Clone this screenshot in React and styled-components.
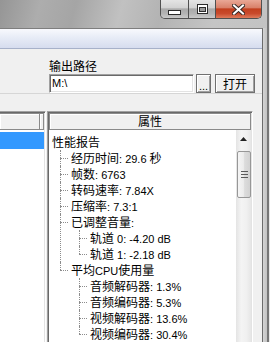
import React from 'react';
import styled, { createGlobalStyle } from 'styled-components';

const GlobalStyle = createGlobalStyle`
  html, body {
    margin: 0;
    padding: 0;
  }

  body {
    background: #f0f0f0;
    font-family: "Noto Sans CJK SC", "Liberation Sans", sans-serif;
    font-size: 12px;
    color: #000;
  }
`;

const Screen = styled.div`
  width: 270px;
  height: 342px;
  overflow: hidden;
  box-sizing: border-box;
  padding-right: 3px;
  display: flex;
  flex-direction: column;
  background: #cfcfcf;
  box-shadow: inset -1px 0 0 #e6e6e6, inset -3px 0 0 #767676;
`;

const TitleBar = styled.div`
  height: 28px;
  flex-shrink: 0;
  display: flex;
  justify-content: flex-end;
  align-items: flex-start;
  padding-right: 5px;
  background: linear-gradient(105deg, #959595 0%, #adadad 15%, #a5a5a5 28%, #c1c1c1 45%, #b3b3b3 60%, #c5c5c5 80%, #c3c3c3 100%);
`;

const Controls = styled.div`
  display: flex;
  height: 19px;
  box-sizing: border-box;
  border: 1px solid #505050;
  border-top: none;
  border-radius: 0 0 5px 5px;
  overflow: hidden;
`;

const CtrlButton = styled.div`
  width: ${(p) => p.$w}px;
  display: flex;
  justify-content: center;
  align-items: ${(p) => (p.$low ? 'flex-end' : 'center')};
  padding-bottom: ${(p) => (p.$low ? '3px' : '0')};
  box-sizing: border-box;
  border-left: ${(p) => (p.$first ? 'none' : '1px solid #505050')};
  background: ${(p) =>
    p.$close
      ? 'linear-gradient(#e9a896 0%, #d9826b 42%, #c2401f 50%, #c94a2c 75%, #df7b5c 100%)'
      : 'linear-gradient(#e4e4e4 0%, #d3d3d3 42%, #aaaaaa 50%, #b3b3b3 75%, #c9c9c9 100%)'};
`;

const Body = styled.div`
  flex: 1;
  min-height: 0;
  display: flex;
`;

const Client = styled.div`
  width: 263px;
  box-sizing: border-box;
  border-top: 1px solid #7e7e7e;
  border-right: 1px solid #6b6b6b;
  background: #f0f0f0;
  display: flex;
  flex-direction: column;
`;

const FrameStrip = styled.div`
  flex: 1;
  background: linear-gradient(to right, #d4d4d4, #c2c2c2);
`;

const Band = styled.div`
  height: 19px;
  flex-shrink: 0;
  border-bottom: 1px solid #a7b1c9;
  background: linear-gradient(#f8f9fd, #e9edf7 40%, #d6dcee);
`;

const TopArea = styled.div`
  height: 35px;
  flex-shrink: 0;
  padding: 9px 0 0 49px;
  border-bottom: 1px solid #d6d6d6;
`;

const FieldLabel = styled.div`
  height: 16px;
  line-height: 16px;
`;

const FieldRow = styled.div`
  display: flex;
  height: 19px;
`;

const PathInput = styled.div`
  width: 145px;
  height: 19px;
  box-sizing: border-box;
  padding-left: 2px;
  background: #fff;
  border: 1px solid;
  border-color: #a0a0a0 #fff #fff #a0a0a0;
  box-shadow: inset 1px 1px 0 #696969, inset -1px -1px 0 #e3e3e3;
  font-family: "Liberation Sans", sans-serif;
  font-size: 11px;
  line-height: 17px;
`;

const PushButton = styled.div`
  width: ${(p) => p.$w}px;
  height: 19px;
  margin-left: ${(p) => p.$gap}px;
  box-sizing: border-box;
  border: 1px solid #707070;
  box-shadow: inset 1px 1px 0 #fff, inset -1px -1px 0 #a0a0a0;
  background: #f0f0f0;
  display: flex;
  justify-content: center;
  align-items: ${(p) => (p.$dots ? 'flex-end' : 'center')};
  line-height: ${(p) => (p.$dots ? '12px' : '16px')};
  font-family: ${(p) => (p.$dots ? '"Liberation Sans", sans-serif' : 'inherit')};
  font-size: ${(p) => (p.$dots ? '11px' : '12px')};
`;

const Panels = styled.div`
  flex: 1;
  min-height: 0;
  display: flex;
  gap: 1px;
  margin-top: 17px;
`;

const LeftPanel = styled.div`
  width: 46px;
  box-sizing: border-box;
  padding: 1px 1px 0 0;
  border-top: 1px solid #a0a0a0;
  border-right: 1px solid #fff;
  box-shadow: inset 0 1px 0 #696969, inset -1px 0 0 #e3e3e3;
  display: flex;
  flex-direction: column;
`;

const RightPanel = styled.div`
  width: 206px;
  box-sizing: border-box;
  padding: 1px 1px 0 1px;
  border: 1px solid;
  border-color: #a0a0a0 #fff #fff #a0a0a0;
  border-bottom: none;
  box-shadow: inset 1px 1px 0 #696969, inset -1px 0 0 #e3e3e3;
  display: flex;
  flex-direction: column;
`;

const HeaderRow = styled.div`
  height: 17px;
  flex-shrink: 0;
  display: flex;
`;

const HeaderCell = styled.div`
  flex: ${(p) => (p.$w ? `0 0 ${p.$w}px` : '1')};
  box-sizing: border-box;
  border: 1px solid #8a8a8a;
  border-left: ${(p) => (p.$noLeft ? 'none' : '1px solid #8a8a8a')};
  box-shadow: inset 1px 1px 0 #fff;
  background: #f0f0f0;
  text-align: center;
  line-height: 14px;
`;

const ListArea = styled.div`
  flex: 1;
  background: #fff;
  padding-top: 2px;
`;

const SelectedRow = styled.div`
  height: 17px;
  background: #3399ff;
`;

const TreeArea = styled.div`
  flex: 1;
  min-height: 0;
  display: flex;
  background: #fff;
`;

const TreeBody = styled.div`
  flex: 1;
  overflow: hidden;
  padding: 4px 0 0 3px;
`;

const NodeLabel = styled.div`
  height: 16px;
  line-height: 16px;
  white-space: nowrap;
`;

const Latin = styled.span`
  font-family: "Liberation Sans", sans-serif;
  font-size: 11px;
`;

const ChildList = styled.div`
  padding-left: 19px;
`;

const ChildItem = styled.div`
  position: relative;

  &::before {
    content: '';
    position: absolute;
    left: -11px;
    top: 0;
    height: ${(p) => (p.$last ? '8px' : '100%')};
    border-left: 1px dotted #8c8c8c;
  }

  &::after {
    content: '';
    position: absolute;
    left: -11px;
    top: 8px;
    width: 8px;
    border-top: 1px dotted #8c8c8c;
  }
`;

const Scrollbar = styled.div`
  width: 15px;
  flex-shrink: 0;
  display: flex;
  flex-direction: column;
  background: linear-gradient(to right, #e4e4e4, #f4f4f4 35%, #f0f0f0 70%, #e6e6e6);
`;

const ArrowButton = styled.div`
  height: 17px;
  display: flex;
  justify-content: center;
  align-items: center;
`;

const Thumb = styled.div`
  height: 47px;
  margin: 4px 0 0 1px;
  box-sizing: border-box;
  border: 1px solid #979797;
  border-radius: 2px;
  background: linear-gradient(to right, #f5f5f5, #ececec 45%, #dcdcdc 55%, #d2d2d2);
  display: flex;
  justify-content: center;
  align-items: center;
`;

const tree = {
  text: '性能报告',
  children: [
    { text: '经历时间: 29.6 秒' },
    { text: '帧数: 6763' },
    { text: '转码速率: 7.84X' },
    { text: '压缩率: 7.3:1' },
    {
      text: '已调整音量:',
      children: [{ text: '轨道 0: -4.20 dB' }, { text: '轨道 1: -2.18 dB' }],
    },
    {
      text: '平均CPU使用量',
      children: [
        { text: '音频解码器: 1.3%' },
        { text: '音频编码器: 5.3%' },
        { text: '视频解码器: 13.6%' },
        { text: '视频编码器: 30.4%' },
      ],
    },
  ],
};

const Mixed = ({ text }) =>
  text
    .split(/([\u0000-\u00ff]+)/)
    .filter(Boolean)
    .map((part, i) =>
      /^[\u0000-\u00ff]+$/.test(part) ? <Latin key={i}>{part}</Latin> : <span key={i}>{part}</span>
    );

const Node = ({ node }) => (
  <>
    <NodeLabel>
      <Mixed text={node.text} />
    </NodeLabel>
    {node.children && (
      <ChildList>
        {node.children.map((child, i) => (
          <ChildItem key={i} $last={i === node.children.length - 1}>
            <Node node={child} />
          </ChildItem>
        ))}
      </ChildList>
    )}
  </>
);

const App = () => (
  <>
    <GlobalStyle />
    <Screen>
      <TitleBar>
        <Controls>
          <CtrlButton $w={27} $first $low>
            <svg width="13" height="5" viewBox="0 0 13 5">
              <rect x="0.5" y="0.5" width="12" height="4" fill="#fff" stroke="#2b2b2b" />
            </svg>
          </CtrlButton>
          <CtrlButton $w={27}>
            <svg width="11" height="10" viewBox="0 0 11 10">
              <rect x="0.5" y="0.5" width="10" height="9" fill="#fff" stroke="#2b2b2b" />
              <rect x="2.5" y="3.5" width="6" height="4" fill="#9a9a9a" stroke="#2b2b2b" />
            </svg>
          </CtrlButton>
          <CtrlButton $w={46} $close>
            <svg width="13" height="11" viewBox="0 0 13 11">
              <path d="M2 1.5 L11 9.5 M11 1.5 L2 9.5" stroke="#3a2a26" strokeWidth="4" strokeLinecap="square" />
              <path d="M2 1.5 L11 9.5 M11 1.5 L2 9.5" stroke="#fff" strokeWidth="2" strokeLinecap="square" />
            </svg>
          </CtrlButton>
        </Controls>
      </TitleBar>
      <Body>
        <Client>
          <Band />
          <TopArea>
            <FieldLabel>输出路径</FieldLabel>
            <FieldRow>
              <PathInput>M:\</PathInput>
              <PushButton $w={15} $gap={2} $dots>...</PushButton>
              <PushButton $w={40} $gap={4}>打开</PushButton>
            </FieldRow>
          </TopArea>
          <Panels>
            <LeftPanel>
              <HeaderRow>
                <HeaderCell $noLeft />
                <HeaderCell $w={4} $noLeft />
              </HeaderRow>
              <ListArea>
                <SelectedRow />
              </ListArea>
            </LeftPanel>
            <RightPanel>
              <HeaderRow>
                <HeaderCell>属性</HeaderCell>
              </HeaderRow>
              <TreeArea>
                <TreeBody>
                  <Node node={tree} />
                </TreeBody>
                <Scrollbar>
                  <ArrowButton>
                    <svg width="7" height="4" viewBox="0 0 7 4">
                      <polygon points="0,4 3.5,0 7,4" fill="#222" />
                    </svg>
                  </ArrowButton>
                  <Thumb>
                    <svg width="7" height="7" viewBox="0 0 7 7">
                      <path d="M0 0.5 H7 M0 3.5 H7 M0 6.5 H7" stroke="#5a5a5a" />
                    </svg>
                  </Thumb>
                </Scrollbar>
              </TreeArea>
            </RightPanel>
          </Panels>
        </Client>
        <FrameStrip />
      </Body>
    </Screen>
  </>
);

export default App;
